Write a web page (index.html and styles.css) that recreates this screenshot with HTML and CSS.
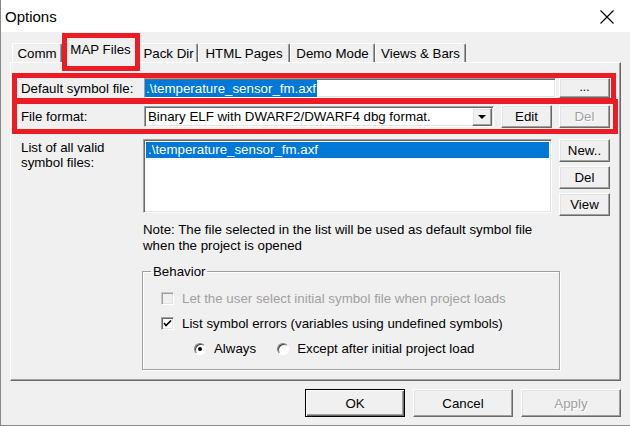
FILE: index.html
```html
<!DOCTYPE html>
<html>
<head>
<meta charset="utf-8">
<link rel="stylesheet" href="styles.css">
</head>
<body>
<div class="window">
  <div class="titlebar">
    <span class="title">Options</span>
    <svg class="close" width="14" height="14" viewBox="0 0 14 14"><path d="M0.5 0.5 L13.5 13.5 M13.5 0.5 L0.5 13.5" stroke="#000" stroke-width="1.1" fill="none"/></svg>
  </div>
  <div class="content">
    <div class="tabs">
      <div class="tab t-comm">Comm</div>
      <div class="tab active t-map">MAP Files</div>
      <div class="tab t-pack">Pack Dir</div>
      <div class="tab t-html">HTML Pages</div>
      <div class="tab t-demo">Demo Mode</div>
      <div class="tab t-views">Views &amp; Bars</div>
    </div>
    <div class="panel">
      <div class="row r1">
        <div class="lbl">Default symbol file:</div>
        <div class="sunken edit"><span class="selected">.\temperature_sensor_fm.axf</span></div>
        <div class="btn side dots">...</div>
      </div>
      <div class="row r2">
        <div class="lbl">File format:</div>
        <div class="sunken combo">
          <span class="combo-text">Binary ELF with DWARF2/DWARF4 dbg format.</span>
          <span class="btn arrow"><svg width="8" height="4" viewBox="0 0 8 4"><path d="M0 0 H8 L4 4 Z" fill="#000"/></svg></span>
        </div>
        <div class="btn side edit-btn">Edit</div>
        <div class="btn side disabled">Del</div>
      </div>
      <div class="row r3">
        <div class="lbl two">List of all valid<br>symbol files:</div>
        <div class="sunken listbox"><div class="item">.\temperature_sensor_fm.axf</div></div>
        <div class="side-col">
          <div class="btn side tall">New..</div>
          <div class="btn side tall">Del</div>
          <div class="btn side tall">View</div>
        </div>
      </div>
      <p class="note">Note: The file selected in the list will be used as default symbol file<br>when the project is opened</p>
      <fieldset class="group">
        <legend>Behavior</legend>
        <div class="opt off"><span class="check dis"></span>Let the user select initial symbol file when project loads</div>
        <div class="opt"><span class="check"><svg width="9" height="9" viewBox="0 0 9 9"><path d="M1 4 L3 6.5 L8 1.5" stroke="#000" stroke-width="1.7" fill="none"/></svg></span>List symbol errors (variables using undefined symbols)</div>
        <div class="opt radios"><span class="radio on"></span><span class="rtxt">Always</span><span class="radio"></span><span>Except after initial project load</span></div>
      </fieldset>
    </div>
    <div class="footer">
      <div class="btn big default">OK</div>
      <div class="btn big">Cancel</div>
      <div class="btn big disabled">Apply</div>
    </div>
  </div>
  <div class="hl hl-tab"></div>
  <div class="hl hl-row1"></div>
  <div class="hl hl-row2"></div>
</div>
</body>
</html>
```
FILE: styles.css
```css
* { box-sizing: border-box; }
html, body { margin: 0; padding: 0; }
body {
  font-family: "Liberation Sans", Arial, sans-serif;
  font-size: 13.3px;
  color: #000;
  background: #f0f0f0;
}
.window {
  position: relative;
  width: 630px;
  height: 426px;
  background: #f0f0f0;
  border-left: 1px solid #888;
  border-bottom: 1px solid #888;
  overflow: hidden;
}
.titlebar {
  height: 32px;
  background: #fff;
  display: flex;
  align-items: center;
  justify-content: space-between;
  padding: 0 16px 0 4px;
}
.title { font-size: 15px; padding-top: 1px; }
.close { display: block; margin-top: 2px; }

.content { padding: 0 9px; }

.tabs {
  display: flex;
  align-items: flex-end;
  height: 28px;
  margin-top: 2px;
  padding-left: 2px;
  position: relative;
  z-index: 1;
}
.tab {
  height: 19px;
  display: flex;
  align-items: center;
  justify-content: center;
  border-top: 1px solid #fff;
  border-left: 1px solid #fff;
  border-right: 1px solid #696969;
  box-shadow: inset -1px 0 0 #a0a0a0;
  border-radius: 2px 2px 0 0;
  background: #f0f0f0;
  padding-top: 1px;
}
.tab.active {
  height: 29px;
  margin-bottom: -1px;
  align-items: flex-start;
  padding-top: 7px;
}
.t-comm { width: 50px; }
.t-map { width: 77px; }
.t-pack { width: 59px; }
.t-html { width: 92px; }
.t-demo { width: 85px; }
.t-views { width: 91px; }

.panel {
  height: 319px;
  border-top: 1px solid #fff;
  border-left: 1px solid #fff;
  border-right: 1px solid #696969;
  border-bottom: 1px solid #696969;
  box-shadow: inset -1px -1px 0 #a0a0a0;
  padding: 15px 0 0 10px;
}
.row { display: flex; align-items: center; }
.lbl { width: 123px; flex: none; }
.r2 { margin-top: 7px; height: 23px; }
.r3 { margin-top: 11px; align-items: flex-start; }
.r3 .lbl { width: 122px; line-height: 15px; padding-top: 1px; }

.sunken {
  background: #fff;
  border: 1px solid;
  border-color: #a0a0a0 #fff #fff #a0a0a0;
  box-shadow: inset 1px 1px 0 #696969, inset -1px -1px 0 #e3e3e3;
}
.edit {
  width: 412px;
  height: 20px;
  padding: 0;
  display: flex;
  align-items: center;
}
.selected {
  background: #0078d7;
  color: #fff;
  line-height: 17px;
  padding: 0 1px 0 1px;
}
.btn {
  display: flex;
  align-items: center;
  justify-content: center;
  background: #f0f0f0;
  border: 1px solid;
  border-color: #fff #696969 #696969 #fff;
  box-shadow: inset -1px -1px 0 #a0a0a0, inset 1px 1px 0 #e3e3e3;
  flex: none;
}
.side { width: 51px; height: 23px; margin-left: 7px; }
.dots { height: 20px; margin-left: 3px; font-size: 12px; padding-bottom: 3px; }
.disabled { color: #a0a0a0; text-shadow: 1px 1px 0 #fff; }

.combo {
  width: 350px;
  height: 21px;
  display: flex;
  align-items: center;
  justify-content: space-between;
  padding: 0 1px 0 2px;
}
.combo-text { padding-left: 1px; }
.arrow { width: 20px; height: 18px; padding-top: 1px; }
.arrow svg { display: block; }

.listbox {
  width: 409px;
  height: 74px;
  padding: 2px 2px;
}
.item {
  background: #0078d7;
  color: #fff;
  height: 16px;
  line-height: 16px;
  padding-left: 2px;
}
.side-col { display: flex; flex-direction: column; gap: 4px; }

.note {
  margin: 6px 0 0 122px;
  line-height: 16px;
}

.group {
  margin: 10px 0 0 121px;
  width: 418px;
  padding: 7px 0 8px 8px;
  border: 1px solid #a0a0a0;
  box-shadow: inset 1px 1px 0 #fff, 1px 1px 0 #fff;
  min-width: 0;
}
.group legend {
  padding: 0 2px;
  margin-left: 0;
  line-height: 15px;
}
.opt { display: flex; align-items: center; height: 25px; padding-left: 10px; }
.opt.off { color: #a0a0a0; }
.check {
  width: 13px;
  height: 13px;
  margin-right: 8px;
  background: #fff;
  border: 1px solid;
  border-color: #a0a0a0 #fff #fff #a0a0a0;
  box-shadow: inset 1px 1px 0 #696969, inset -1px -1px 0 #e3e3e3;
  display: flex;
  align-items: center;
  justify-content: center;
  flex: none;
}
.check svg { display: block; }
.check.dis { background: #f0f0f0; border-color: #c8c8c8 #fff #fff #c8c8c8; box-shadow: inset 1px 1px 0 #a0a0a0, inset -1px -1px 0 #e3e3e3; }
.opt.radios { padding-left: 43px; }
.radio {
  width: 12px;
  height: 12px;
  border-radius: 50%;
  background: #fff;
  border: 1px solid;
  border-color: #808080 #fff #fff #808080;
  box-shadow: inset 1px 1px 0 #404040;
  margin-right: 8px;
  flex: none;
  display: flex;
  align-items: center;
  justify-content: center;
}
.radio.on::after {
  content: "";
  width: 4px;
  height: 4px;
  border-radius: 50%;
  background: #000;
}
.rtxt { margin-right: 21px; }

.footer {
  display: flex;
  justify-content: flex-end;
  gap: 8px;
  margin-top: 8px;
}
.big { width: 100px; height: 28px; }
.default { border: 1px solid #000; box-shadow: inset 1px 1px 0 #fff, inset -1px -1px 0 #696969, inset -2px -2px 0 #a0a0a0; }

.hl {
  position: absolute;
  z-index: 5;
  border: 5px solid #ed1c24;
  pointer-events: none;
}
.hl-tab { left: 61px; top: 33px; width: 78px; height: 38px; }
.hl-row1 { left: 11px; top: 73px; width: 604px; height: 30px; }
.hl-row2 { left: 11px; top: 99px; width: 606px; height: 35px; }
```
